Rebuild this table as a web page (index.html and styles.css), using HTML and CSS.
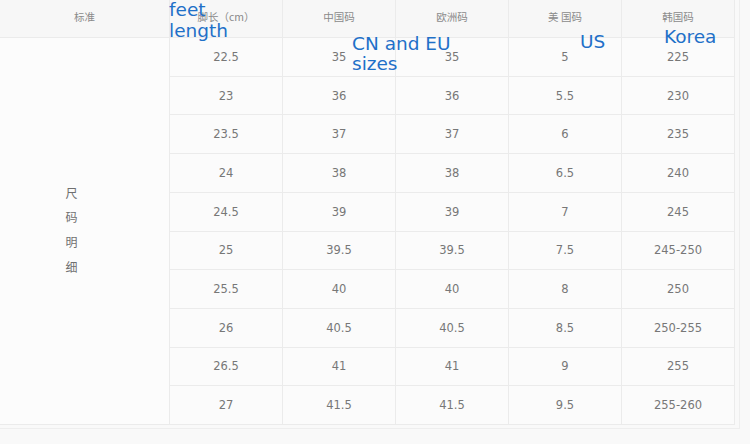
FILE: index.html
```html
<!DOCTYPE html>
<html lang="zh">
<head>
<meta charset="utf-8">
<title>尺码表</title>
<link rel="stylesheet" href="styles.css">
</head>
<body>
<div class="page">
  <div class="frame">
    <div class="grid">
      <div class="cell head">标准</div>
      <div class="cell head">脚长（cm）</div>
      <div class="cell head">中国码</div>
      <div class="cell head">欧洲码</div>
      <div class="cell head">美 国码</div>
      <div class="cell head">韩国码</div>

      <div class="cell side">
        <span>尺</span><span>码</span><span>明</span><span>细</span>
      </div>

      <div class="cell">22.5</div><div class="cell">35</div><div class="cell">35</div><div class="cell">5</div><div class="cell">225</div>
      <div class="cell">23</div><div class="cell">36</div><div class="cell">36</div><div class="cell">5.5</div><div class="cell">230</div>
      <div class="cell">23.5</div><div class="cell">37</div><div class="cell">37</div><div class="cell">6</div><div class="cell">235</div>
      <div class="cell">24</div><div class="cell">38</div><div class="cell">38</div><div class="cell">6.5</div><div class="cell">240</div>
      <div class="cell">24.5</div><div class="cell">39</div><div class="cell">39</div><div class="cell">7</div><div class="cell">245</div>
      <div class="cell">25</div><div class="cell">39.5</div><div class="cell">39.5</div><div class="cell">7.5</div><div class="cell">245-250</div>
      <div class="cell">25.5</div><div class="cell">40</div><div class="cell">40</div><div class="cell">8</div><div class="cell">250</div>
      <div class="cell">26</div><div class="cell">40.5</div><div class="cell">40.5</div><div class="cell">8.5</div><div class="cell">250-255</div>
      <div class="cell">26.5</div><div class="cell">41</div><div class="cell">41</div><div class="cell">9</div><div class="cell">255</div>
      <div class="cell">27</div><div class="cell">41.5</div><div class="cell">41.5</div><div class="cell">9.5</div><div class="cell">255-260</div>
    </div>
  </div>

  <div class="note note-feet">feet<br>length</div>
  <div class="note note-cn">CN and EU<br>sizes</div>
  <div class="note note-us">US</div>
  <div class="note note-kr">Korea</div>
</div>
</body>
</html>
```
FILE: styles.css
```css
html, body {
  margin: 0;
  padding: 0;
  background: #f9f9f9;
}

.page {
  position: relative;
  width: 750px;
  height: 444px;
  overflow: hidden;
  background: #f9f9f9;
}

.frame {
  width: 740px;
  height: 429px;
  box-sizing: border-box;
  border-right: 1px solid #eeeeee;
  border-bottom: 1px solid #eeeeee;
}

.grid {
  display: grid;
  grid-template-columns: 170px repeat(5, 113px);
  grid-template-rows: 38px repeat(10, 1fr);
  width: 735px;
  height: 425px;
  background: #fbfbfb;
}

.cell {
  box-sizing: border-box;
  border-right: 1px solid #ebebeb;
  border-bottom: 1px solid #ebebeb;
  display: flex;
  align-items: center;
  justify-content: center;
  font-family: "DejaVu Sans", Verdana, sans-serif;
  font-size: 11.5px;
  color: #777777;
}

.head {
  background: #f7f7f7;
  font-family: "Noto Sans CJK SC", "DejaVu Sans", sans-serif;
  font-size: 10.5px;
  color: #8a8a8a;
  padding-bottom: 4px;
}

.side {
  grid-column: 1;
  grid-row: 2 / span 10;
  flex-direction: column;
  padding-right: 26px;
  padding-bottom: 2px;
  font-family: "Noto Sans CJK SC", sans-serif;
  font-size: 12px;
  color: #6f6f6f;
  line-height: 24.7px;
  background: #fcfcfc;
}

.note {
  position: absolute;
  font-family: "DejaVu Sans", Verdana, sans-serif;
  font-size: 18.5px;
  line-height: 21px;
  color: #1f70c8;
  white-space: nowrap;
}

.note-feet {
  left: 169px;
  top: -1px;
  line-height: 21px;
}

.note-cn {
  left: 352px;
  top: 34px;
  line-height: 20px;
}

.note-us {
  left: 580px;
  top: 31px;
}

.note-kr {
  left: 664px;
  top: 26px;
}
```
